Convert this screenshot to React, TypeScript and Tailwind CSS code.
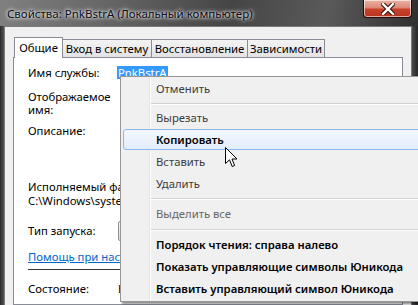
import React from "react";

const font = { fontFamily: '"Noto Sans", "Segoe UI", sans-serif' };

function MenuItem({
  label,
  enabled,
  highlighted,
  dim,
}: {
  label: string;
  enabled?: boolean;
  highlighted?: boolean;
  dim?: boolean;
}) {
  return (
    <div className="relative h-[22px] flex items-center">
      {highlighted && (
        <div className="absolute left-[2px] right-[2px] top-0 bottom-[1px] rounded-[3px] border border-[#8ab8ee] bg-[linear-gradient(#f4f8fd,#e2edfb)]" />
      )}
      <span
        className={
          "relative pl-[35px] text-[11.3px] leading-[14px] whitespace-nowrap " +
          (enabled
            ? "text-black font-semibold"
            : dim
            ? "text-[#666666]"
            : "text-[#3c3c3c]")
        }
      >
        {label}
      </span>
    </div>
  );
}

function Sep({ h }: { h: string }) {
  return (
    <div className={"flex flex-col justify-center pl-[29px] " + h}>
      <div className="h-px bg-[#d2d2d2]" />
      <div className="h-px bg-white" />
    </div>
  );
}

export default function App() {
  return (
    <div
      className="relative w-[418px] h-[305px] overflow-hidden bg-[#3b3b3b] flex flex-col"
      style={font}
    >
      {/* Title bar */}
      <div className="h-[26px] shrink-0 flex items-start bg-[linear-gradient(100deg,#808080_0%,#616161_30%,#454545_55%,#5a5a5a_78%,#2f2f2f_100%)]">
        <span className="pl-[7px] pt-[6px] text-[11.5px] leading-[15px] text-[#0a0a1a] whitespace-nowrap [text-shadow:0_0_5px_#ffffff,0_0_3px_#ffffff]">
          Свойства: PnkBstrA (Локальный компьютер)
        </span>
        <div className="ml-auto mr-[6px] w-[49px] h-[18px] rounded-b-[4px] border border-t-0 border-[#2a0a05] bg-[linear-gradient(#eab1a4_0%,#dd8a76_45%,#c7412a_55%,#b8321e_100%)] flex items-center justify-center shadow-[inset_0_0_0_1px_rgba(255,255,255,0.6)]">
          <svg width="14" height="12" viewBox="0 0 14 12">
            <path
              d="M2 1 L12 11 M12 1 L2 11"
              stroke="#3a1510"
              strokeWidth="4.5"
              strokeLinecap="square"
            />
            <path
              d="M2 1 L12 11 M12 1 L2 11"
              stroke="#ffffff"
              strokeWidth="2.4"
              strokeLinecap="square"
            />
          </svg>
        </div>
      </div>

      {/* Body */}
      <div className="flex-1 flex min-h-0">
        <div className="w-[4px] bg-[linear-gradient(90deg,#2a2a2a,#555555)]" />
        <div className="flex-1 bg-[#f0f0f0] border-l border-t border-r border-[#7a7a7a] pt-[9px] pl-[8px] pr-[8px] flex flex-col min-h-0">
          {/* tabs */}
          <div className="flex items-end pl-px h-[21px] shrink-0 relative z-10 text-[11.3px] leading-[14px] text-black whitespace-nowrap">
            <div className="w-[49px] h-[21px] -mb-px bg-white border-l border-t border-r border-[#898c95] flex items-start justify-center pt-[3px]">
              Общие
            </div>
            <div className="w-[89px] h-[18px] border-t border-r border-[#898c95] bg-[linear-gradient(#f3f3f3,#e3e3e3)] flex items-center justify-center">
              Вход в систему
            </div>
            <div className="w-[96px] h-[18px] border-t border-r border-[#898c95] bg-[linear-gradient(#f3f3f3,#e3e3e3)] flex items-center justify-center">
              Восстановление
            </div>
            <div className="w-[77px] h-[18px] border-t border-r border-[#898c95] bg-[linear-gradient(#f3f3f3,#e3e3e3)] flex items-center justify-center">
              Зависимости
            </div>
          </div>
          {/* panel */}
          <div className="flex-1 bg-white border border-[#898c95] pl-[14px] pt-[8px] text-[11.3px] leading-[13px] text-black whitespace-nowrap">
            <div className="flex h-[13px]">
              <span className="w-[89px]">Имя службы:</span>
              <span className="inline-block h-[13px] bg-[#3399ff] text-white px-px">
                PnkBstrA
              </span>
            </div>
            <div className="w-[93px] overflow-hidden">
              <div className="mt-[11px]">
                Отображаемое
                <br />
                имя:
              </div>
              <div className="mt-[8px]">Описание:</div>
              <div className="mt-[43px]">Исполняемый файл:</div>
              <div className="mt-px">C:\Windows\system32</div>
              <div className="mt-[17px] flex items-center h-[13px]">
                <span className="w-[90px] shrink-0">Тип запуска:</span>
                <div className="w-[40px] shrink-0 h-[20px] border border-[#8f8f8f] rounded-[2px] bg-[linear-gradient(#f4f4f4,#dcdcdc)]" />
              </div>
              <div className="mt-[13px] text-[#0066cc] underline">
                Помощь при настройке
              </div>
              <div className="mt-[6px] h-px w-full bg-[#3a3a3a]" />
              <div className="mt-[12px] flex">
                <span className="w-[90px] shrink-0">Состояние:</span>
                <span>Выполняется</span>
              </div>
            </div>
          </div>
        </div>
        <div className="w-[6px] bg-[linear-gradient(90deg,#4a4a4a,#262626)]" />
      </div>

      {/* Context menu */}
      <div className="absolute left-[120px] top-[76px] w-[310px] bg-[#f0f0f0] border border-[#979797] shadow-[2px_2px_2px_rgba(0,0,0,0.45)] pt-px pb-px">
        <div className="absolute left-[28px] top-0 bottom-0 w-px bg-[#e2e3e3]" />
        <div className="absolute left-[29px] top-0 bottom-0 w-px bg-white" />
        <MenuItem label="Отменить" />
        <Sep h="h-[7px]" />
        <MenuItem label="Вырезать" />
        <MenuItem label="Копировать" enabled highlighted />
        <MenuItem label="Вставить" />
        <MenuItem label="Удалить" />
        <Sep h="h-[8px]" />
        <MenuItem label="Выделить все" dim />
        <Sep h="h-[9px]" />
        <MenuItem label="Порядок чтения: справа налево" enabled />
        <MenuItem label="Показать управляющие символы Юникода" enabled />
        <MenuItem label="Вставить управляющий символ Юникода" enabled />
      </div>

      {/* Mouse cursor */}
      <svg
        className="absolute left-[225px] top-[147px]"
        width="13"
        height="21"
        viewBox="0 0 13 21"
      >
        <path
          d="M0.5 0.5 L0.5 16.5 L4.5 12.8 L7.2 19.5 L9.6 18.5 L7 12 L12 12 Z"
          fill="#ffffff"
          stroke="#000000"
          strokeWidth="1"
          strokeLinejoin="miter"
        />
      </svg>
    </div>
  );
}
